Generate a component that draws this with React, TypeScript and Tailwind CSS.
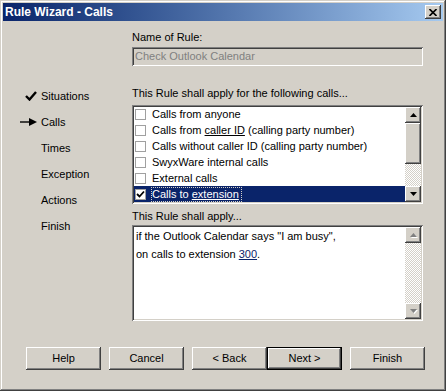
import React from "react"

const raised =
  "shadow-[inset_-1px_-1px_#404040,inset_1px_1px_#ffffff,inset_-2px_-2px_#808080,inset_2px_2px_#d4d0c8]"
const sunken =
  "shadow-[inset_1px_1px_#808080,inset_-1px_-1px_#ffffff,inset_2px_2px_#404040,inset_-2px_-2px_#d4d0c8]"

const calls = [
  { label: "Calls from anyone" },
  { label: "Calls from ", link: "caller ID", rest: " (calling party number)" },
  { label: "Calls without caller ID (calling party number)" },
  { label: "SwyxWare internal calls" },
  { label: "External calls" },
  { label: "Calls to ", link: "extension", selected: true, checked: true },
]

const steps = ["Situations", "Calls", "Times", "Exception", "Actions", "Finish"]

function Arrow({ up, disabled }: { up?: boolean; disabled?: boolean }) {
  return (
    <svg width="7" height="4" viewBox="0 0 7 4" className={disabled ? "drop-shadow-[1px_1px_0_#ffffff]" : ""}>
      <path
        d={up ? "M3.5 0 L7 4 L0 4 Z" : "M0 0 L7 0 L3.5 4 Z"}
        fill={disabled ? "#808080" : "#000000"}
      />
    </svg>
  )
}

function ScrollBtn({ up, disabled }: { up?: boolean; disabled?: boolean }) {
  return (
    <div className={`w-4 h-4 bg-[#d4d0c8] flex items-center justify-center ${raised}`}>
      <Arrow up={up} disabled={disabled} />
    </div>
  )
}

function Checkbox({ checked }: { checked?: boolean }) {
  return (
    <div className="w-[11px] h-[11px] bg-white border border-[#a0a0a0] flex items-center justify-center shrink-0">
      {checked && (
        <svg width="9" height="9" viewBox="0 0 9 9">
          <path d="M1 4 L3.5 6.5 L8 1.5" stroke="#000" strokeWidth="1.8" fill="none" />
        </svg>
      )}
    </div>
  )
}

function Button({ label, isDefault }: { label: string; isDefault?: boolean }) {
  return (
    <div
      className={`w-[75px] h-[23px] flex items-center justify-center bg-[#d4d0c8] text-black ${
        isDefault
          ? "border border-black shadow-[inset_-1px_-1px_#404040,inset_1px_1px_#ffffff,inset_-2px_-2px_#808080]"
          : raised
      }`}
    >
      {label}
    </div>
  )
}

export default function App() {
  return (
    <div
      className="w-[446px] h-[391px] bg-[#d4d0c8] p-[3px] flex flex-col text-[11px] leading-[13px] text-black shadow-[inset_-1px_-1px_#404040,inset_1px_1px_#d4d0c8,inset_-2px_-2px_#808080,inset_2px_2px_#ffffff]"
      style={{ fontFamily: '"Liberation Sans", Arial, sans-serif' }}
    >
      {/* title bar */}
      <div className="h-[18px] flex items-center justify-between pl-[2px] pr-[2px] bg-gradient-to-r from-[#0a246a] to-[#a6caf0]">
        <span className="font-bold text-white text-[12px]">Rule Wizard - Calls</span>
        <div className={`w-4 h-[14px] bg-[#d4d0c8] flex items-center justify-center ${raised}`}>
          <svg width="8" height="7" viewBox="0 0 8 7">
            <path d="M0.5 0 L7.5 7 M7.5 0 L0.5 7" stroke="#000" strokeWidth="1.6" />
          </svg>
        </div>
      </div>

      <div className="flex flex-1">
        {/* steps */}
        <div className="w-[129px] pt-[62px]">
          {steps.map((s, i) => (
            <div key={s} className="h-[26px] flex items-center">
              <div className="w-[38px] flex justify-end pr-[4px]">
                {i === 0 && (
                  <svg width="12" height="10" viewBox="0 0 12 10">
                    <path d="M1 5 L4.5 8.5 L11 1" stroke="#000" strokeWidth="2.4" fill="none" />
                  </svg>
                )}
                {i === 1 && (
                  <svg width="17" height="8" viewBox="0 0 17 8">
                    <path d="M0 4 H11" stroke="#000" strokeWidth="1.4" />
                    <path d="M9 0 L17 4 L9 8 Z" fill="#000" />
                  </svg>
                )}
              </div>
              <span>{s}</span>
            </div>
          ))}
        </div>

        {/* form */}
        <div className="w-[291px] flex flex-col pt-[10px]">
          <div>Name of Rule:</div>
          <div className={`mt-[3px] h-[19px] bg-[#d4d0c8] flex items-center px-[3px] text-[#808080] ${sunken}`}>
            Check Outlook Calendar
          </div>

          <div className="mt-[21px]">This Rule shall apply for the following calls...</div>
          <div className={`mt-[5px] h-[99px] bg-white p-[2px] flex ${sunken}`}>
            <div className="flex-1 flex flex-col">
              {calls.map((c) => (
                <div
                  key={c.label + (c.link ?? "")}
                  className={`h-4 flex items-center gap-[6px] pl-[1px] ${c.selected ? "bg-[#0a246a] text-white" : ""}`}
                >
                  <Checkbox checked={c.checked} />
                  <span className={c.selected ? "outline-1 outline-dotted outline-[#d4d0c8] pr-[2px]" : ""}>
                    {c.label}
                    {c.link && <span className="underline">{c.link}</span>}
                    {c.rest}
                  </span>
                </div>
              ))}
            </div>
            <div className="w-4 flex flex-col">
              <ScrollBtn up />
              <div className={`h-[41px] bg-[#d4d0c8] ${raised}`} />
              <div className="flex-1 bg-[repeating-conic-gradient(#d4d0c8_0_25%,#ffffff_0_50%)] bg-size-[2px_2px]" />
              <ScrollBtn />
            </div>
          </div>

          <div className="mt-[6px]">This Rule shall apply...</div>
          <div className={`mt-[2px] h-[96px] bg-white p-[2px] flex ${sunken}`}>
            <div className="flex-1 pl-[2px] leading-[18px]">
              <div>if the Outlook Calendar says "I am busy",</div>
              <div>
                on calls to extension <span className="text-[#0a246a] underline">300</span>.
              </div>
            </div>
            <div className="w-4 flex flex-col">
              <ScrollBtn up disabled />
              <div className="flex-1 bg-[repeating-conic-gradient(#d4d0c8_0_25%,#ffffff_0_50%)] bg-size-[2px_2px]" />
              <ScrollBtn disabled />
            </div>
          </div>
        </div>
      </div>

      {/* buttons */}
      <div className="flex pl-[23px] pb-[18px]">
        <Button label="Help" />
        <div className="w-2" />
        <Button label="Cancel" />
        <div className="w-2" />
        <Button label="< Back" />
        <Button label="Next >" isDefault />
        <div className="w-2" />
        <Button label="Finish" />
      </div>
    </div>
  )
}
